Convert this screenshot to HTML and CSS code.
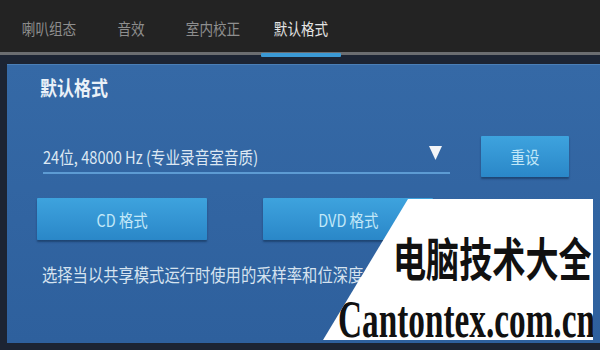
FILE: index.html
```html
<!DOCTYPE html>
<html lang="zh-CN">
<head>
<meta charset="utf-8">
<title>默认格式</title>
<link rel="stylesheet" href="styles.css">
</head>
<body>
<div class="screen">
  <nav class="tabs">
    <div class="tab"><span class="sq">喇叭组态</span></div>
    <div class="tab"><span class="sq">音效</span></div>
    <div class="tab"><span class="sq">室内校正</span></div>
    <div class="tab active"><span class="sq">默认格式</span></div>
  </nav>
  <div class="rule"></div>
  <div class="frame">
    <section class="panel">
      <h2 class="heading"><span class="sq">默认格式</span></h2>
      <div class="row">
        <div class="select">
          <span class="sq value">24位, 48000 Hz (专业录音室音质)</span>
          <svg class="caret" width="13" height="14" viewBox="0 0 13 14"><polygon points="0,0 13,0 6.5,14" fill="#f2f4f7"/></svg>
        </div>
        <button class="btn reset"><span class="sq c">重设</span></button>
      </div>
      <div class="row formats">
        <button class="btn fmt"><span class="sq c">CD 格式</span></button>
        <button class="btn fmt"><span class="sq c">DVD 格式</span></button>
      </div>
      <p class="desc"><span class="sq">选择当以共享模式运行时使用的采样率和位深度。</span></p>
    </section>
  </div>
  <div class="watermark">
    <div class="wm-cn"><span class="sql">电脑技术大全</span></div>
    <div class="wm-en"><span class="sql">Cantontex.com.cn</span></div>
  </div>
</div>
</body>
</html>
```

FILE: styles.css
```css
* { box-sizing: border-box; }
html, body { margin: 0; padding: 0; }
body {
  width: 600px;
  height: 350px;
  overflow: hidden;
  background: #1c2433;
  font-family: "Noto Sans CJK SC", "Noto Sans", sans-serif;
}
.screen { position: relative; width: 600px; height: 350px; overflow: hidden; }

.sq {
  display: inline-block;
  white-space: nowrap;
  transform: scaleX(0.85);
  transform-origin: left center;
}
.sq.c { transform-origin: center center; }
.sql {
  display: inline-block;
  white-space: nowrap;
  transform-origin: left center;
}

.tabs {
  height: 52px;
  background: #232323;
  display: flex;
  padding-left: 8px;
  padding-top: 4px;
}
.tab {
  position: relative;
  width: 82px;
  display: flex;
  align-items: center;
  justify-content: center;
  font-size: 16px;
  color: #8e8e8e;
}
.tab .sq { transform-origin: center center; }
.tab.active { color: #e4e4e4; width: 94px; }
.tab.active::after {
  content: "";
  position: absolute;
  left: 7px;
  right: 7px;
  bottom: -5px;
  height: 4px;
  background: #3b9ad6;
  border-radius: 1px;
}
.rule { height: 3px; background: #6b6d70; }

.frame { padding: 9px 0 7px 7px; }
.panel {
  height: 279px;
  background: linear-gradient(#3569a6, #2e609d);
  border-top: 1px solid #4a7fb8;
  padding: 12px 0 0 30px;
}
.heading {
  margin: 0 0 0 3px;
  font-size: 20px;
  line-height: 21px;
  font-weight: 700;
  color: #eaf1f8;
}
.row { display: flex; }
.heading + .row { margin-top: 38px; }
.select {
  margin-left: 6px;
  width: 407px;
  height: 38px;
  padding-top: 4px;
  border-bottom: 2px solid #5d9bd3;
  display: flex;
  align-items: center;
  justify-content: space-between;
  font-size: 17px;
  color: #dde8f3;
}
.select .value { transform: scaleX(0.86); }
.caret { margin-right: 8px; margin-top: -6px; flex: none; }

.btn {
  border: none;
  padding: 0;
  margin: 0;
  font-family: inherit;
  color: #c2e8f8;
  background: linear-gradient(#3ea3de, #2a87c8);
  box-shadow: 0 2px 2px rgba(8, 30, 60, 0.45);
  border-radius: 1px;
  display: flex;
  align-items: center;
  justify-content: center;
}
.reset {
  margin-left: 31px;
  width: 88px;
  height: 41px;
  font-size: 17px;
}
.formats { margin-top: 21px; gap: 56px; }
.fmt { width: 170px; height: 42px; font-size: 17px; }

.desc {
  margin: 23px 0 0 5px;
  font-size: 18px;
  line-height: 22px;
  color: #d6e3ef;
}

.watermark {
  position: absolute;
  left: 323px;
  top: 199px;
  width: 270px;
  height: 141px;
  background: #ffffff;
  clip-path: polygon(85px 0, 100% 0, 100% 100%, 0 100%);
  color: #111111;
}
.wm-cn {
  padding-top: 35px;
  padding-left: 70px;
  font-size: 46px;
  line-height: 44px;
  font-weight: 700;
  white-space: nowrap;
}
.wm-cn .sql { transform: scaleX(0.72); }
.wm-en {
  margin-top: 23px;
  padding-left: 15px;
  font-family: "Liberation Serif", "Times New Roman", serif;
  font-size: 52px;
  line-height: 38px;
  font-weight: 700;
  white-space: nowrap;
}
.wm-en .sql { transform: scaleX(0.64); }
```
